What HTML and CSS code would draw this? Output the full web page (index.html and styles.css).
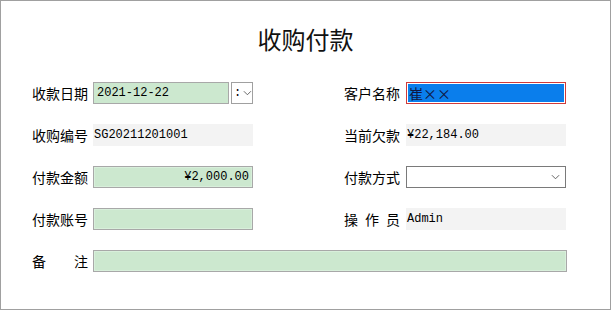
FILE: index.html
```html
<!DOCTYPE html>
<html lang="zh-CN">
  <head>
    <meta charset="UTF-8" />
    <title>收购付款</title>
    <link rel="stylesheet" href="styles.css">
  </head>
  <body>
    <div class="window">
      <h1 class="title">收购付款</h1>

      <div class="form">
        <div class="row">
          <div class="pair">
            <span class="label">收款日期</span>
            <div class="field date">
              <span class="date-text">2021-12-22</span>
              <span class="date-btn">
                <span class="colon">:</span>
                <svg class="chevron" viewBox="0 0 10 6"><polyline points="1 1 5 5 9 1"></polyline></svg>
              </span>
            </div>
          </div>
          <div class="pair">
            <span class="label">客户名称</span>
            <div class="field customer"><span class="customer-text">崔××</span></div>
          </div>
        </div>

        <div class="row">
          <div class="pair">
            <span class="label">收购编号</span>
            <div class="field readonly">SG20211201001</div>
          </div>
          <div class="pair">
            <span class="label">当前欠款</span>
            <div class="field readonly">¥22,184.00</div>
          </div>
        </div>

        <div class="row">
          <div class="pair">
            <span class="label">付款金额</span>
            <div class="field input amount">¥2,000.00</div>
          </div>
          <div class="pair">
            <span class="label">付款方式</span>
            <div class="field select">
              <svg class="chevron" viewBox="0 0 10 6"><polyline points="1 1 5 5 9 1"></polyline></svg>
            </div>
          </div>
        </div>

        <div class="row">
          <div class="pair">
            <span class="label">付款账号</span>
            <div class="field input"></div>
          </div>
          <div class="pair">
            <span class="label spread"><span>操</span><span>作</span><span>员</span></span>
            <div class="field readonly">Admin</div>
          </div>
        </div>

        <div class="row">
          <div class="pair wide">
            <span class="label spread"><span>备</span><span>注</span></span>
            <div class="field input"></div>
          </div>
        </div>
      </div>
    </div>
  </body>
</html>
```

FILE: styles.css
```css
* {
  margin: 0;
  padding: 0;
  box-sizing: border-box;
}

body {
  background: #ffffff;
  font-family: "Noto Sans CJK SC", "Noto Sans", sans-serif;
  color: #000000;
}

.window {
  width: 611px;
  height: 310px;
  border: 1px solid #a0a0a0;
  background: #ffffff;
}

.title {
  font-size: 24px;
  font-weight: normal;
  line-height: 32px;
  text-align: center;
  margin-top: 22px;
  color: #111111;
}

.form {
  display: flex;
  flex-direction: column;
  gap: 20px;
  margin-top: 27px;
  padding-left: 31px;
}

.row {
  display: flex;
  gap: 91px;
}

.pair {
  display: flex;
  align-items: center;
  gap: 5px;
  width: 221px;
}

.pair + .pair {
  gap: 6px;
  width: 222px;
}

.pair.wide {
  width: 535px;
}

.label {
  width: 56px;
  flex-shrink: 0;
  font-size: 14px;
  line-height: 20px;
  white-space: nowrap;
}

.label.spread {
  display: flex;
  justify-content: space-between;
}

.field {
  flex: 1;
  height: 22px;
  display: flex;
  align-items: center;
  font-family: "Liberation Mono", "Noto Sans CJK SC", monospace;
  font-size: 12px;
  color: #000000;
  padding: 0 3px;
}

.readonly {
  background: #f3f3f3;
  padding: 0 1px;
}

.input {
  background: #cce8cf;
  border: 1px solid #a8a8a8;
  box-shadow: inset 0 0 0 1px #d8efdb;
}

.amount {
  justify-content: flex-end;
}

.date {
  padding: 0;
  background: #ffffff;
}

.date-text {
  flex: 1;
  height: 22px;
  display: flex;
  align-items: center;
  padding: 0 3px;
  background: #cce8cf;
  border: 1px solid #a8a8a8;
}

.date-btn {
  width: 22px;
  height: 22px;
  display: flex;
  align-items: center;
  gap: 2px;
  padding-left: 2px;
  border: 1px solid #a0a0a0;
  margin-left: 2px;
}

.colon {
  font-size: 12px;
  line-height: 12px;
}

.chevron {
  width: 9px;
  height: 6px;
  fill: none;
  stroke: #555555;
  stroke-width: 1;
}

.customer {
  border: 1px solid #d03a3a;
  padding: 1px;
  background: #ffffff;
}

.customer-text {
  flex: 1;
  height: 100%;
  display: flex;
  align-items: center;
  background: #0a7eec;
  color: #101840;
  font-family: "Noto Sans CJK SC", sans-serif;
  font-size: 14px;
  padding-left: 1px;
}

.select {
  border: 1px solid #7a7a7a;
  background: #ffffff;
  justify-content: flex-end;
  padding-right: 5px;
}
```
